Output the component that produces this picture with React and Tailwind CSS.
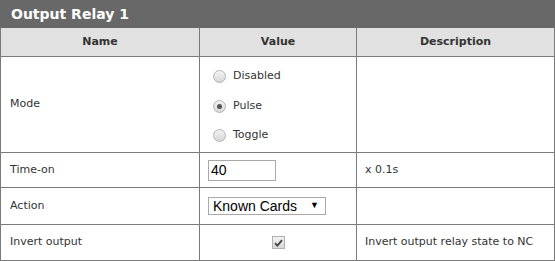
import React from "react";

const font = "font-['DejaVu_Sans','Verdana',sans-serif]";

function Radio({ checked }) {
  return (
    <span className="w-[13px] h-[13px] rounded-full border border-[#b5b5b5] bg-gradient-to-b from-[#f4f4f4] to-[#d6d6d6] flex items-center justify-center shrink-0">
      {checked && <span className="w-[5px] h-[5px] rounded-full bg-[#555]" />}
    </span>
  );
}

export default function App() {
  const cell = "border-r border-b border-[#7a7a7a]";
  return (
    <div className={`w-[555px] bg-white text-[#333] ${font} text-[11px]`}>
      <div className="h-[28px] bg-[#686868] text-white font-bold text-[14px] pl-[11px] flex items-center">
        Output Relay 1
      </div>
      <div className="grid grid-cols-[199px_157px_198px] border-l border-[#7a7a7a] w-[554px]">
        {/* header */}
        <div className={`${cell} h-[29px] bg-[#e1e1e1] font-bold flex items-center justify-center`}>Name</div>
        <div className={`${cell} h-[29px] bg-[#e1e1e1] font-bold flex items-center justify-center`}>Value</div>
        <div className={`${cell} h-[29px] bg-[#e1e1e1] font-bold flex items-center justify-center`}>Description</div>

        {/* Mode */}
        <div className={`${cell} h-[96px] pl-[9px] flex items-center`}>Mode</div>
        <div className={`${cell} h-[96px] pl-[13px] pt-[3px] flex flex-col justify-center gap-[13px]`}>
          <div className="flex items-center gap-[7px]"><Radio /><span>Disabled</span></div>
          <div className="flex items-center gap-[7px]"><Radio checked /><span>Pulse</span></div>
          <div className="flex items-center gap-[7px]"><Radio /><span>Toggle</span></div>
        </div>
        <div className={`${cell} h-[96px]`} />

        {/* Time-on */}
        <div className={`${cell} h-[35px] pl-[9px] flex items-center`}>Time-on</div>
        <div className={`${cell} h-[35px] pl-[8px] flex items-center`}>
          <div className="w-[68px] h-[21px] border border-[#a9a9a9] flex items-center pl-[2px] font-['Liberation_Sans',sans-serif] text-[14px] text-black">40</div>
        </div>
        <div className={`${cell} h-[35px] pl-[8px] flex items-center`}>x 0.1s</div>

        {/* Action */}
        <div className={`${cell} h-[37px] pl-[9px] flex items-center`}>Action</div>
        <div className={`${cell} h-[37px] pl-[8px] flex items-center`}>
          <div className="w-[118px] h-[18px] border border-[#a9a9a9] flex items-center justify-between pl-[4px] pr-[6px] font-['Liberation_Sans',sans-serif] text-[14px] text-black">
            <span>Known Cards</span>
            <span className="text-[9px]">▼</span>
          </div>
        </div>
        <div className={`${cell} h-[37px]`} />

        {/* Invert */}
        <div className={`${cell} h-[36px] pl-[9px] flex items-center`}>Invert output</div>
        <div className={`${cell} h-[36px] flex items-center justify-center`}>
          <span className="w-[13px] h-[13px] border border-[#b0b0b0] bg-gradient-to-b from-[#f2f2f2] to-[#d8d8d8] flex items-center justify-center">
            <svg width="9" height="8" viewBox="0 0 9 8">
              <path d="M1 4.2 L3.4 6.6 L8 1.2" stroke="#444" strokeWidth="1.8" fill="none" />
            </svg>
          </span>
        </div>
        <div className={`${cell} h-[36px] pl-[8px] flex items-center`}>Invert output relay state to NC</div>
      </div>
    </div>
  );
}
